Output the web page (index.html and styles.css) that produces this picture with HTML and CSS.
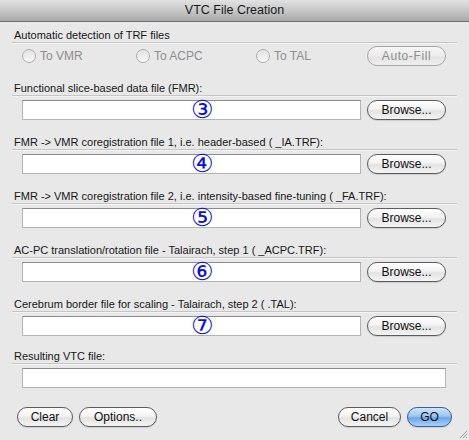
FILE: index.html
```html
<!DOCTYPE html>
<html>
<head>
<meta charset="utf-8">
<title>VTC File Creation</title>
<link rel="stylesheet" href="styles.css">
</head>
<body>
<div class="window">
  <div class="titlebar">VTC File Creation</div>
  <div class="content">
    <div class="hdr first">Automatic detection of TRF files</div>
    <div class="radio-row">
      <label class="radio r1"><span class="dot"></span>To VMR</label>
      <label class="radio r2"><span class="dot"></span>To ACPC</label>
      <label class="radio r3"><span class="dot"></span>To TAL</label>
      <button class="btn disabled autofill">Auto-Fill</button>
    </div>

    <div class="hdr">Functional slice-based data file (FMR):</div>
    <div class="field-row">
      <div class="field"><span class="num">③</span></div>
      <button class="btn browse">Browse...</button>
    </div>

    <div class="hdr">FMR -&gt; VMR coregistration file 1, i.e. header-based ( _IA.TRF):</div>
    <div class="field-row">
      <div class="field"><span class="num">④</span></div>
      <button class="btn browse">Browse...</button>
    </div>

    <div class="hdr">FMR -&gt; VMR coregistration file 2, i.e. intensity-based fine-tuning ( _FA.TRF):</div>
    <div class="field-row">
      <div class="field"><span class="num">⑤</span></div>
      <button class="btn browse">Browse...</button>
    </div>

    <div class="hdr">AC-PC translation/rotation file - Talairach, step 1 ( _ACPC.TRF):</div>
    <div class="field-row">
      <div class="field"><span class="num">⑥</span></div>
      <button class="btn browse">Browse...</button>
    </div>

    <div class="hdr">Cerebrum border file for scaling - Talairach, step 2 ( .TAL):</div>
    <div class="field-row">
      <div class="field"><span class="num">⑦</span></div>
      <button class="btn browse">Browse...</button>
    </div>

    <div class="hdr result">Resulting VTC file:</div>
    <div class="field-row">
      <div class="field wide"></div>
    </div>

    <div class="button-row">
      <button class="btn clear">Clear</button>
      <button class="btn options">Options..</button>
      <span class="spacer"></span>
      <button class="btn cancel">Cancel</button>
      <button class="btn go">GO</button>
    </div>
  </div>
  <svg class="grip" width="10" height="10" viewBox="0 0 10 10">
    <path d="M9 2 L2 9 M9 5 L5 9 M9 8 L8 9" stroke="#9a9a9a" stroke-width="1"/>
  </svg>
</div>
</body>
</html>
```

FILE: styles.css
```css
html, body {
  margin: 0;
  padding: 0;
}
body {
  width: 469px;
  height: 440px;
  overflow: hidden;
  background: #e8e8e8;
  font-family: "Liberation Sans", Arial, sans-serif;
  color: #1c1c1c;
}
.window {
  position: relative;
  width: 469px;
  height: 440px;
  background: #e8e8e8;
}
.titlebar {
  box-sizing: border-box;
  height: 22px;
  border-bottom: 1px solid #717171;
  background: linear-gradient(#e2e2e2, #c8c8c8 50%, #a8a8a8);
  text-align: center;
  font-size: 12.5px;
  line-height: 21px;
  color: #1a1a1a;
}
.content {
  padding: 0 12px;
}
.hdr {
  height: 14px;
  line-height: 14px;
  font-size: 11px;
  padding-left: 2px;
  border-bottom: 1px solid #c6c6c6;
  box-shadow: 0 1px 0 #f4f4f4;
  margin-top: 15px;
  white-space: nowrap;
  overflow: hidden;
  color: #161616;
}
.hdr.first {
  margin-top: 6px;
}
.hdr.result {
  margin-top: 13px;
}
.radio-row {
  display: flex;
  align-items: center;
  height: 20px;
  margin-top: 3px;
  padding-left: 10px;
}
.radio {
  display: flex;
  align-items: center;
  font-size: 12px;
  color: #8e8e8e;
}
.r1 { width: 114px; }
.r2 { width: 120px; }
.r3 { width: 100px; }
.dot {
  box-sizing: border-box;
  width: 14px;
  height: 14px;
  border-radius: 50%;
  border: 1px solid #b0b0b0;
  background: linear-gradient(#e2e2e2, #f8f8f8);
  margin-right: 4px;
}
.btn {
  box-sizing: border-box;
  height: 20px;
  padding: 0;
  border: 1px solid #5c5c5c;
  border-radius: 10px;
  background: linear-gradient(#ffffff, #f3f3f3 45%, #e3e3e3 55%, #f4f4f4);
  font-family: "Liberation Sans", Arial, sans-serif;
  font-size: 12px;
  color: #111;
  line-height: 18px;
  text-align: center;
  box-shadow: 0 1px 1px rgba(0,0,0,0.12);
}
.btn.disabled {
  border-color: #a8a8a8;
  color: #8e8e8e;
  background: linear-gradient(#f6f6f6, #ececec 50%, #e4e4e4 55%, #efefef);
  box-shadow: none;
}
.autofill {
  width: 79px;
  margin-left: auto;
  margin-right: 11px;
  letter-spacing: 0.6px;
}
.field-row {
  display: flex;
  align-items: center;
  margin-top: 4px;
  padding-left: 10px;
  height: 20px;
}
.field {
  position: relative;
  box-sizing: border-box;
  width: 339px;
  height: 20px;
  background: #fff;
  border: 1px solid #b4b4b4;
  border-top-color: #8c8c8c;
}
.field.wide {
  width: 424px;
}
.num {
  position: absolute;
  left: 168px;
  top: -2px;
  font-family: "DejaVu Sans", sans-serif;
  font-size: 25px;
  line-height: 22px;
  color: #0a0af5;
}
.browse {
  width: 79px;
  margin-left: 6px;
}
.button-row {
  display: flex;
  align-items: center;
  margin-top: 19px;
  padding: 0 5px;
  height: 20px;
}
.clear { width: 56px; }
.options { width: 78px; margin-left: 6px; }
.spacer { flex: 1; }
.cancel { width: 63px; }
.go {
  width: 45px;
  margin-left: 6px;
  border-color: #3d5f95;
  background: linear-gradient(#cfe4fa, #9cc6f1 45%, #6aa7e8 55%, #a8d2fa);
}
.grip {
  position: absolute;
  right: 1px;
  bottom: 1px;
}
```
